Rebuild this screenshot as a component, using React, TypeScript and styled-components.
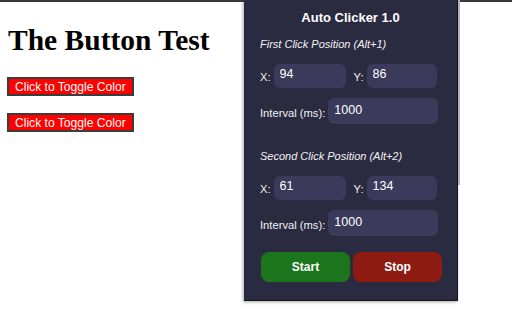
import styled, { createGlobalStyle } from "styled-components";

const GlobalStyle = createGlobalStyle`
  html, body {
    margin: 0;
    padding: 0;
    background: #ffffff;
  }
  body {
    width: 512px;
    height: 320px;
    overflow: hidden;
  }
`;

interface ClickSection {
  title: string;
  x: number;
  y: number;
  interval: number;
}

const sections: ClickSection[] = [
  { title: "First Click Position (Alt+1)", x: 94, y: 86, interval: 1000 },
  { title: "Second Click Position (Alt+2)", x: 61, y: 134, interval: 1000 },
];

const App: React.FC = () => {
  return (
    <>
      <GlobalStyle />
      <Page>
        <Heading>The Button Test</Heading>
        <ToggleList>
          <ToggleButton>Click to Toggle Color</ToggleButton>
          <ToggleButton>Click to Toggle Color</ToggleButton>
        </ToggleList>
      </Page>
      <Panel>
        <ScrollThumb />
        <Title>Auto Clicker 1.0</Title>
        {sections.map((s, i) => (
          <Section key={i} first={i === 0}>
            <SectionTitle>{s.title}</SectionTitle>
            <Row>
              <Label>X:</Label>
              <Field width={72} defaultValue={s.x} />
              <Label gap>Y:</Label>
              <Field width={70} defaultValue={s.y} />
            </Row>
            <Row>
              <Label>Interval (ms):</Label>
              <Field width={110} tall defaultValue={s.interval} />
            </Row>
          </Section>
        ))}
        <Actions>
          <ActionButton tone="#1a751c">Start</ActionButton>
          <ActionButton tone="#8e1b12">Stop</ActionButton>
        </Actions>
      </Panel>
    </>
  );
};
export default App;

const Page = styled.div`
  border-top: 2px solid #3a3a3a;
  padding: 0 8px;
  height: 318px;
  box-sizing: border-box;
`;

const Heading = styled.h1`
  font-family: "Liberation Serif", serif;
  font-size: 29.5px;
  font-weight: 700;
  color: #000;
  margin: 21px 0 0;
  line-height: 34px;
`;

const ToggleList = styled.div`
  display: flex;
  flex-direction: column;
  align-items: flex-start;
  gap: 17px;
  margin-top: 20px;
  margin-left: -1px;
`;

const ToggleButton = styled.button`
  font-family: "Liberation Sans", Arial, sans-serif;
  font-size: 12.1px;
  color: #fff;
  background: #ff0000;
  border: 2px solid #3c3c3c;
  padding: 0 6px;
  height: 19px;
  line-height: 14px;
`;

const Panel = styled.div`
  position: absolute;
  top: 0;
  left: 244px;
  width: 214px;
  height: 301px;
  box-sizing: border-box;
  background: #2a2a40;
  border-right: 1px solid #111120;
  border-bottom: 1px solid #15151f;
  box-shadow: -1px 1px 3px rgba(0, 0, 0, 0.35);
  padding: 10px 15px 0 16px;
  font-family: "Liberation Sans", Arial, sans-serif;
  color: #fff;
`;

const ScrollThumb = styled.div`
  position: absolute;
  top: 0;
  right: -3px;
  width: 2px;
  height: 185px;
  background: #b4b4b4;
`;

const Title = styled.div`
  text-align: center;
  font-size: 13px;
  font-weight: 700;
  line-height: 15px;
  margin-left: -1px;
`;

const Section = styled.div<{ first: boolean }>`
  display: flex;
  flex-direction: column;
  gap: 10px;
  margin-top: ${({ first }) => (first ? "13px" : "26px")};
`;

const SectionTitle = styled.div`
  font-size: 11px;
  font-style: italic;
  line-height: 13px;
  color: #f2f2f2;
  margin-bottom: 3px;
`;

const Row = styled.div`
  display: flex;
  align-items: flex-end;
`;

const Label = styled.span<{ gap?: boolean }>`
  flex-shrink: 0;
  white-space: nowrap;
  font-size: 11.2px;
  line-height: 13px;
  color: #f0f0f0;
  margin: 0 3px 4px ${({ gap }) => (gap ? "8px" : "0")};
`;

const Field = styled.input<{ width: number; tall?: boolean }>`
  flex-shrink: 0;
  width: ${({ width }) => width}px;
  height: ${({ tall }) => (tall ? 26 : 24)}px;
  box-sizing: border-box;
  background: #3b3a5a;
  border: none;
  border-radius: 6px;
  padding: ${({ tall }) => (tall ? "4px 6px 6px" : "2px 6px 6px")};
  font-family: "Liberation Sans", Arial, sans-serif;
  font-size: 12.5px;
  color: #fff;
  outline: none;
`;

const Actions = styled.div`
  display: flex;
  gap: 3px;
  margin-top: 16px;
  margin-left: 1px;
`;

const ActionButton = styled.button<{ tone: string }>`
  width: 90px;
  height: 30px;
  border: none;
  border-radius: 8px;
  background: ${({ tone }) => tone};
  color: #fff;
  font-family: "Liberation Sans", Arial, sans-serif;
  font-size: 12px;
  font-weight: 700;
`;
